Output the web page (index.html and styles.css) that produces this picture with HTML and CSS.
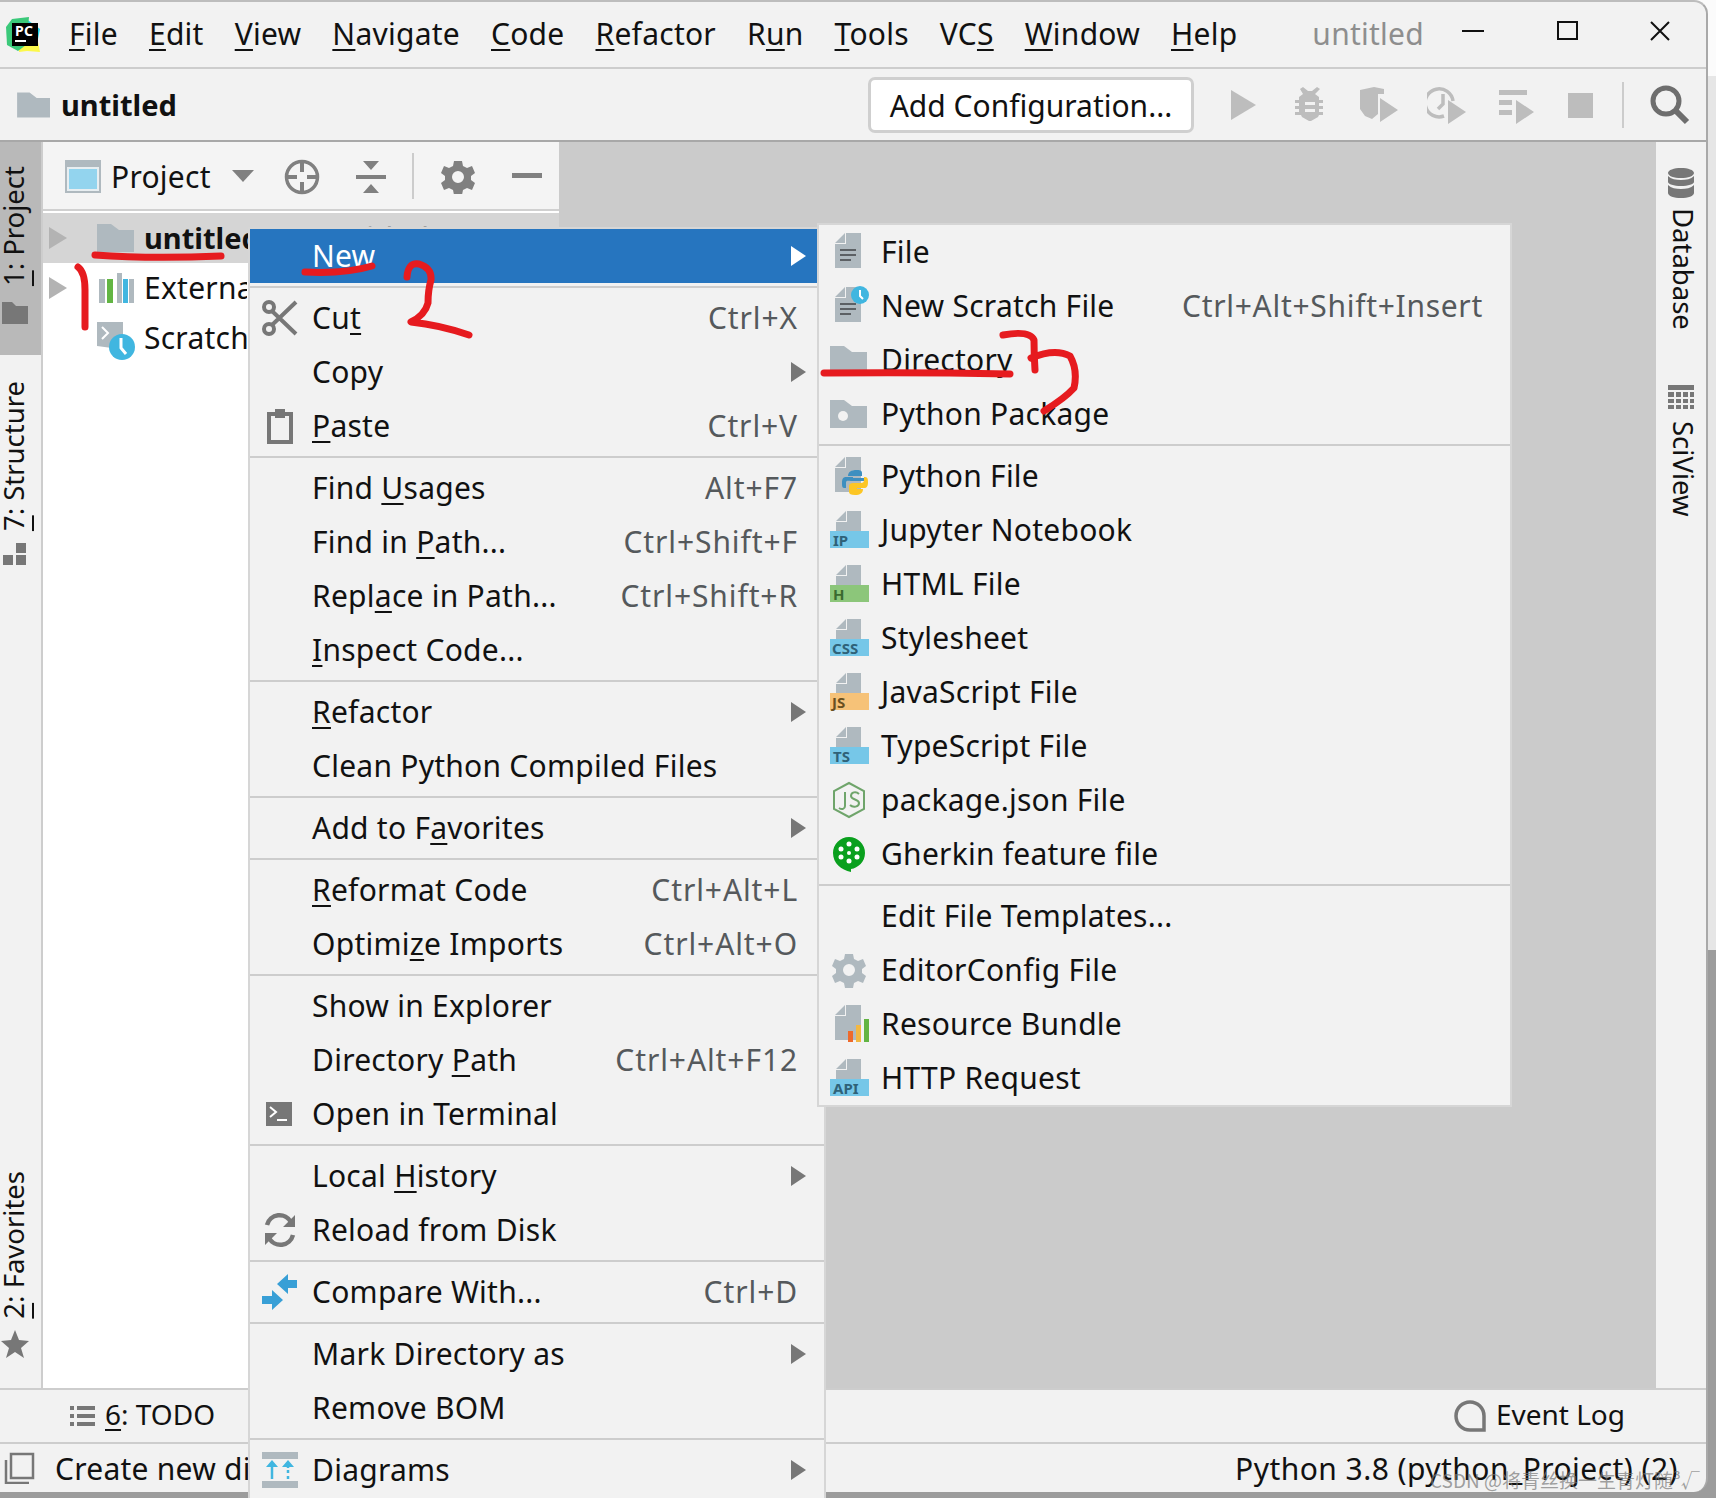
FILE: index.html
```html
<!DOCTYPE html>
<html lang="en">
<head>
<meta charset="utf-8">
<title>untitled</title>
<link rel="stylesheet" href="styles.css">
</head>
<body>
<svg class="defs" width="0" height="0" aria-hidden="true">
  <defs>
    <g id="doc"><path class="f-doc" d="M6 11 16 1v10zM17 1h15v35H6V12h11z"/></g>
    <g id="lines"><path class="f-dk" d="M11 17h16v2H11zM11 22h16v2H11zM11 27h11v2H11z"/></g>
    <g id="tdoc"><path class="f-doc" d="M7 11 17 1v10zM18 1h14v20H7v-9h11z"/></g>
    <path id="folder" d="M1 4h14l8 6h15v22H1z"/>
  </defs>
</svg>
<div class="page">
  <div class="window">
    <header class="titlebar">
      <svg class="logo" width="36" height="36" viewBox="0 0 36 36">
        <path fill="#21d4e8" d="M20 2 35 13l-4 20-8-8z"/>
        <path fill="#fcf84a" d="M14 30 30 10l5 26-13-1-8 1z"/>
        <path fill="#3bc97a" d="M7 3 24 1l-3 28-8 6-11-6-1-18z"/>
        <rect x="7" y="7" width="26" height="23" fill="#000"/>
        <text class="logo-t" x="10" y="20">PC</text>
        <rect x="10" y="24" width="11" height="2" fill="#fff"/>
      </svg>
      <nav class="menubar">
        <span><u>F</u>ile</span><span><u>E</u>dit</span><span><u>V</u>iew</span><span><u>N</u>avigate</span><span><u>C</u>ode</span><span><u>R</u>efactor</span><span>R<u>u</u>n</span><span><u>T</u>ools</span><span>VC<u>S</u></span><span><u>W</u>indow</span><span><u>H</u>elp</span>
      </nav>
      <span class="wintitle">untitled</span>
      <div class="winctl">
        <span class="wc-min"></span>
        <span class="wc-max"></span>
        <svg width="20" height="20" viewBox="0 0 20 20"><path d="M1 1l18 18M19 1 1 19" stroke="#111" stroke-width="2" fill="none"/></svg>
      </div>
    </header>
    <div class="toolbar">
      <svg class="i-head" width="40" height="32" viewBox="0 0 40 36"><use href="#folder" class="f-doc"/></svg>
      <b class="crumb">untitled</b>
      <button class="addcfg">Add Configuration...</button>
      <div class="runset">
        <svg width="40" height="40" viewBox="3 0 40 40"><path class="f-off" d="M8 5 33 20 8 35z"/></svg>
        <svg width="40" height="40" viewBox="3 0 40 40"><path class="f-off" d="M10 4l3-2 5 4h4l5-4 3 2-5 5 4 3v3h4v3h-4v3h4v3h-4v3h4v3h-4l-1 2-7 4h-2l-7-4-1-2H5v-3h4v-3H5v-3h4v-3H5v-3h4v-3l4-3zM15 17v3h10v-3zM15 24v3h10v-3z" fill-rule="evenodd"/></svg>
        <svg width="40" height="40" viewBox="1 0 40 40"><path class="f-off" d="M1 5 15 2l10 2v5h-6v20l-6 5-7-3-5-7zM21 13l18 12-18 12z"/></svg>
        <svg width="40" height="40" viewBox="-1 0 40 40"><path d="M25 16A14 14 0 1 0 16 31M15 9v10l-5 5" fill="none" stroke="#bdbdbd" stroke-width="3.5"/><path class="f-off" d="M20 15l18 12-18 12z"/></svg>
        <svg width="40" height="40" viewBox="-2 0 40 40"><path class="f-off" d="M3 5h28v5H3zM3 15h13v5H3zM3 25h13v5H3zM20 15l18 12-18 12z"/></svg>
        <svg width="40" height="40" viewBox="0 0 40 40"><rect class="f-off" x="7" y="8" width="25" height="25"/></svg>
      </div>
      <span class="tb-sep"></span>
      <svg width="40" height="40" viewBox="0 0 40 40"><circle cx="16" cy="16" r="13" fill="none" stroke="#6e6e6e" stroke-width="5"/><path d="M25 25 37 37" stroke="#6e6e6e" stroke-width="6"/></svg>
    </div>
    <main class="body">
      <aside class="strip-left">
        <div class="vtab vtab-on">
          <span class="vt"><u>1</u>: Project</span>
          <svg width="26" height="22" viewBox="0 0 26 22"><path class="f-strip" d="M0 0h10l4 4h12v18H0z"/></svg>
        </div>
        <div class="vtab vtab-st">
          <span class="vt"><u>7</u>: Structure</span>
          <svg width="24" height="22" viewBox="0 0 24 22"><path class="f-strip" d="M13 0h10v10H13zM0 12h10v10H0zM13 12h10v10H13z"/></svg>
        </div>
        <div class="vtab vtab-fav">
          <span class="vt"><u>2</u>: Favorites</span>
          <svg width="28" height="28" viewBox="0 0 28 28"><path class="f-strip" d="M14 0l4 10 10 1-8 7 3 10-9-6-9 6 3-10-8-7 10-1z"/></svg>
        </div>
      </aside>
      <section class="project">
        <div class="p-head">
          <svg class="p-ico" width="36" height="33" viewBox="0 0 36 33"><rect width="36" height="33" fill="#afb9bf"/><rect x="2" y="7" width="32" height="24" fill="#e8eef1"/><rect x="4" y="9" width="28" height="20" fill="#93d4ee"/></svg>
          <span class="p-title">Project</span>
          <span class="p-drop"></span>
          <svg class="p-target" width="36" height="36" viewBox="0 0 36 36"><circle cx="18" cy="18" r="15.5" fill="none" stroke="#808080" stroke-width="3.5"/><path d="M18 2v11M18 23v11M2 18h11M23 18h11" stroke="#808080" stroke-width="4"/></svg>
          <svg class="p-coll" width="32" height="34" viewBox="0 0 32 34"><path fill="#808080" d="M8 1h16l-8 9zM1 15h30v4H1zM16 24l8 9H8z"/></svg>
          <span class="p-sep"></span>
          <svg class="p-gear" width="34" height="34" viewBox="0 0 34 34"><path fill="#808080" fill-rule="evenodd" d="M13 1h8l1 5 4 2 5-2 3 7-4 3v4l4 3-3 7-5-2-4 2-1 5h-8l-1-5-4-2-5 2-3-7 4-3v-4L0 13l3-7 5 2 4-2zM17 11a6 6 0 1 0 0 12 6 6 0 0 0 0-12z"/></svg>
          <span class="p-min"></span>
        </div>
        <div class="p-rule"></div>
        <div class="tree">
          <div class="t-row t-sel">
            <span class="t-arrow"></span>
            <svg class="t-ico" width="40" height="36" viewBox="0 0 40 36"><use href="#folder" class="f-doc"/></svg>
            <b>untitled</b><span class="t-path">D:\untitled</span>
          </div>
          <div class="t-row">
            <span class="t-arrow"></span>
            <svg class="t-ico" width="40" height="36" viewBox="0 0 40 36"><path class="f-doc" d="M3 9h6v24H3zM21 3h5v30h-5zM33 9h5v24h-5z"/><path fill="#62b543" d="M11 9h6v24h-6z"/><path fill="#40b6e0" d="M27 9h5v24h-5z"/></svg>
            <span class="t-clip">External Libraries</span>
          </div>
          <div class="t-row">
            <span class="t-noarrow"></span>
            <svg class="t-ico t-sc" width="40" height="40" viewBox="0 0 40 40"><path class="f-doc" d="M1 1h26v14L16 27l-15-2z"/><path d="M6 6l6 6-6 6" fill="none" stroke="#fff" stroke-width="2"/><circle cx="26" cy="26" r="13" fill="#40b6e0"/><path d="M25 17v10l5 6" fill="none" stroke="#fff" stroke-width="3"/></svg>
            <span class="t-clip">Scratches and Consoles</span>
          </div>
        </div>
      </section>
      <div class="editor"></div>
      <aside class="strip-right">
        <div class="rtab rtab-db">
          <svg width="28" height="30" viewBox="0 0 28 30"><path class="f-strip" d="M14 0c7 0 13 2 13 5s-6 5-13 5S1 8 1 5s6-5 13-5zM1 8c3 3 8 4 13 4s10-1 13-4v6c0 2-6 4-13 4S1 16 1 14zM1 17c3 3 8 4 13 4s10-1 13-4v8c0 3-6 5-13 5S1 28 1 25z"/></svg>
          <span class="vr">Database</span>
        </div>
        <div class="rtab rtab-sv">
          <svg width="28" height="24" viewBox="0 0 28 24"><path class="f-strip" d="M1 0h26v5H1zM1 7h6v5H1zM9 7h5v5H9zM16 7h5v5h-5zM23 7h4v5h-4zM1 14h6v4H1zM9 14h5v4H9zM16 14h5v4h-5zM23 14h4v4h-4zM1 20h6v4H1zM9 20h5v4H9zM16 20h5v4h-5zM23 20h4v4h-4z"/></svg>
          <span class="vr">SciView</span>
        </div>
      </aside>
    </main>
    <div class="toolsbar">
      <div class="todo">
        <svg width="25" height="20" viewBox="0 0 25 20"><path class="f-strip" d="M0 0h4v4H0zM7 0h18v4H7zM0 8h4v4H0zM7 8h18v4H7zM0 16h4v4H0zM7 16h18v4H7z"/></svg>
        <span><u>6</u>: TODO</span>
      </div>
      <div class="evlog">
        <svg width="32" height="32" viewBox="0 0 32 32"><path d="M30 30H16A14 14 0 1 1 30 16z" fill="none" stroke="#777" stroke-width="3.5"/></svg>
        <span>Event Log</span>
      </div>
    </div>
    <div class="statusbar">
      <svg class="st-ico" width="32" height="32" viewBox="0 0 32 32"><path d="M8 2h22v24H8zM3 8v23h23" fill="none" stroke="#777" stroke-width="2.5"/></svg>
      <span class="st-msg">Create new directory or Python package</span>
      <span class="st-py">Python 3.8 (python_Project) (2)</span>
    </div>
  </div>

  <div class="menu menu-main">
    <div class="row row-on"><span class="slot"></span><span>New</span><i class="arr"></i></div>
    <div class="hr"></div>
    <div class="row"><span class="slot"><svg width="40" height="40" viewBox="0 0 40 40"><g fill="none" stroke="#777" stroke-width="4"><circle cx="9" cy="9" r="5"/><circle cx="9" cy="31" r="5"/><path d="M12 13 36 36M12 27 36 4"/></g></svg></span><span>Cu<u>t</u></span><em>Ctrl+X</em></div>
    <div class="row"><span class="slot"></span><span>Copy</span><i class="arr"></i></div>
    <div class="row"><span class="slot"><svg width="40" height="40" viewBox="0 0 40 40"><path d="M9 8h22v28H9z" fill="none" stroke="#777" stroke-width="4"/><path fill="#777" d="M15 3h10v9H15z"/></svg></span><span><u>P</u>aste</span><em>Ctrl+V</em></div>
    <div class="hr"></div>
    <div class="row"><span class="slot"></span><span>Find <u>U</u>sages</span><em>Alt+F7</em></div>
    <div class="row"><span class="slot"></span><span>Find in <u>P</u>ath...</span><em>Ctrl+Shift+F</em></div>
    <div class="row"><span class="slot"></span><span>Repl<u>a</u>ce in Path...</span><em>Ctrl+Shift+R</em></div>
    <div class="row"><span class="slot"></span><span><u>I</u>nspect Code...</span></div>
    <div class="hr"></div>
    <div class="row"><span class="slot"></span><span><u>R</u>efactor</span><i class="arr"></i></div>
    <div class="row"><span class="slot"></span><span>Clean Python Compiled Files</span></div>
    <div class="hr"></div>
    <div class="row"><span class="slot"></span><span>Add to F<u>a</u>vorites</span><i class="arr"></i></div>
    <div class="hr"></div>
    <div class="row"><span class="slot"></span><span><u>R</u>eformat Code</span><em>Ctrl+Alt+L</em></div>
    <div class="row"><span class="slot"></span><span>Optimi<u>z</u>e Imports</span><em>Ctrl+Alt+O</em></div>
    <div class="hr"></div>
    <div class="row"><span class="slot"></span><span>Show in Explorer</span></div>
    <div class="row"><span class="slot"></span><span>Directory <u>P</u>ath</span><em>Ctrl+Alt+F12</em></div>
    <div class="row"><span class="slot"><svg width="40" height="40" viewBox="0 0 40 40"><rect x="6" y="8" width="26" height="24" fill="#777"/><path d="M10 13l6 5-6 5" fill="none" stroke="#fff" stroke-width="2"/><path d="M17 25h10v2H17z" fill="#fff"/></svg></span><span>Open in Terminal</span></div>
    <div class="hr"></div>
    <div class="row"><span class="slot"></span><span>Local <u>H</u>istory</span><i class="arr"></i></div>
    <div class="row"><span class="slot"><svg width="40" height="40" viewBox="0 0 40 40"><g fill="none" stroke="#777" stroke-width="4.5"><path d="M7 15A13 13 0 0 1 31 12"/><path d="M33 25A13 13 0 0 1 9 28"/></g><path fill="#777" d="M35 5v12H23zM5 35V23h12z"/></svg></span><span>Reload from Disk</span></div>
    <div class="hr"></div>
    <div class="row"><span class="slot"><svg width="40" height="40" viewBox="0 0 40 40"><path fill="#389fd6" d="M28 2v6h9v8h-9v6l-11-10zM12 38v-6H2v-8h10v-6l11 10z"/></svg></span><span>Compare With...</span><em>Ctrl+D</em></div>
    <div class="hr"></div>
    <div class="row"><span class="slot"></span><span>Mark Directory as</span><i class="arr"></i></div>
    <div class="row"><span class="slot"></span><span>Remove BOM</span></div>
    <div class="hr"></div>
    <div class="row"><span class="slot"><svg width="40" height="40" viewBox="0 0 40 40"><path class="f-doc" d="M2 2h36v7H2zM2 31h36v7H2z"/><path d="M12 29V15M28 29v-3M28 23v-3M28 18v-3" stroke="#40b6e0" stroke-width="2.5"/><path fill="#40b6e0" d="M12 10l6 7H6zM28 10l6 7H22z"/></svg></span><span>Diagrams</span><i class="arr"></i></div>
  </div>

  <div class="menu menu-sub">
    <div class="row"><span class="slot"><svg width="40" height="40" viewBox="0 0 40 40"><use href="#doc"/><use href="#lines"/></svg></span><span>File</span></div>
    <div class="row"><span class="slot"><svg width="40" height="40" viewBox="0 0 40 40"><use href="#doc"/><use href="#lines"/><circle cx="31" cy="9" r="9" fill="#40b6e0"/><path d="M31 4v6l3 3" fill="none" stroke="#fff" stroke-width="2"/></svg></span><span>New Scratch File</span><em>Ctrl+Alt+Shift+Insert</em></div>
    <div class="row"><span class="slot"><svg width="40" height="36" viewBox="0 0 40 36"><use href="#folder" class="f-doc"/></svg></span><span>Directory</span></div>
    <div class="row"><span class="slot"><svg width="40" height="36" viewBox="0 0 40 36"><use href="#folder" class="f-doc"/><circle cx="14" cy="20" r="5" fill="#f2f2f2"/></svg></span><span>Python Package</span></div>
    <div class="hr"></div>
    <div class="row"><span class="slot"><svg width="40" height="40" viewBox="0 0 40 40"><use href="#doc"/><path fill="#3d8fc0" d="M28 14c4 0 5 1 5 3v3H24v2h12l-0 3h-14c-3 0-5-1-5 2v5h-2c-2 0-2-3-2-5 0-4 1-6 4-6h7v-1h-5c0-4 3-6 9-6z"/><path fill="#fcc624" d="M36 21c3 0 3 3 3 5 0 4-1 6-4 6h-7v1h6c0 4-3 6-8 6-4 0-6-1-6-3v-6c0-2 2-3 4-3h8c2 0 3-1 3-3v-3z"/></svg></span><span>Python File</span></div>
    <div class="row"><span class="slot"><svg width="40" height="40" viewBox="0 0 40 40"><use href="#tdoc"/><rect class="b-blue" x="1" y="21" width="39" height="17"/><text class="bt bt-blue" x="4" y="36">IP</text></svg></span><span>Jupyter Notebook</span></div>
    <div class="row"><span class="slot"><svg width="40" height="40" viewBox="0 0 40 40"><use href="#tdoc"/><rect class="b-green" x="1" y="21" width="39" height="17"/><text class="bt bt-green" x="4" y="36">H</text></svg></span><span>HTML File</span></div>
    <div class="row"><span class="slot"><svg width="40" height="40" viewBox="0 0 40 40"><use href="#tdoc"/><rect class="b-blue" x="1" y="21" width="39" height="17"/><text class="bt bt-blue" x="3" y="36">CSS</text></svg></span><span>Stylesheet</span></div>
    <div class="row"><span class="slot"><svg width="40" height="40" viewBox="0 0 40 40"><use href="#tdoc"/><rect class="b-orange" x="1" y="21" width="39" height="17"/><text class="bt bt-orange" x="3" y="36">JS</text></svg></span><span>JavaScript File</span></div>
    <div class="row"><span class="slot"><svg width="40" height="40" viewBox="0 0 40 40"><use href="#tdoc"/><rect class="b-blue" x="1" y="21" width="39" height="17"/><text class="bt bt-blue" x="4" y="36">TS</text></svg></span><span>TypeScript File</span></div>
    <div class="row"><span class="slot"><svg width="40" height="40" viewBox="0 0 40 40"><path d="M20 3 35 11v18L20 37 5 29V11z" fill="none" stroke="#6fa56b" stroke-width="2"/><path d="M16 12v14c0 3-3 4-6 2M30 14c-3-3-8-2-8 2s8 3 8 7-6 5-9 2" fill="none" stroke="#6fa56b" stroke-width="2"/></svg></span><span>package.json File</span></div>
    <div class="row"><span class="slot"><svg width="40" height="40" viewBox="0 0 40 40"><path fill="#0aa01e" d="M20 3a16 16 0 0 1 16 16c0 9-7 15-14 16v3c-10-2-18-9-18-19A16 16 0 0 1 20 3z"/><g fill="#fff"><circle cx="20" cy="10" r="2.5"/><circle cx="20" cy="27" r="2.5"/><circle cx="12" cy="15" r="2.5"/><circle cx="28" cy="15" r="2.5"/><circle cx="12" cy="23" r="2.5"/><circle cx="28" cy="23" r="2.5"/><circle cx="20" cy="19" r="2"/></g></svg></span><span>Gherkin feature file</span></div>
    <div class="hr"></div>
    <div class="row"><span class="slot"></span><span>Edit File Templates...</span></div>
    <div class="row"><span class="slot"><svg width="40" height="40" viewBox="-3 -3 40 40"><path class="f-doc" fill-rule="evenodd" d="M13 1h8l1 5 4 2 5-2 3 7-4 3v4l4 3-3 7-5-2-4 2-1 5h-8l-1-5-4-2-5 2-3-7 4-3v-4L0 13l3-7 5 2 4-2zM17 11a6 6 0 1 0 0 12 6 6 0 0 0 0-12z"/></svg></span><span>EditorConfig File</span></div>
    <div class="row"><span class="slot"><svg width="40" height="40" viewBox="0 0 40 40"><use href="#doc"/><rect x="19" y="27" width="5" height="11" fill="#ee6a2b"/><rect x="27" y="21" width="5" height="17" fill="#f2b843"/><rect x="35" y="15" width="5" height="23" fill="#62b543"/></svg></span><span>Resource Bundle</span></div>
    <div class="row"><span class="slot"><svg width="40" height="40" viewBox="0 0 40 40"><use href="#tdoc"/><rect class="b-blue" x="1" y="21" width="39" height="17"/><text class="bt bt-blue" x="4" y="36">API</text></svg></span><span>HTTP Request</span></div>
  </div>

  <svg class="ink" width="1716" height="1498" viewBox="0 0 1716 1498" aria-hidden="true">
    <path d="M95 255Q150 259 221 256M78 267Q85 272 85 290L85 327M305 272Q345 274 372 266M407 277Q408 262 419 264Q432 268 431 280Q428 290 428 303Q425 315 411 322Q440 325 469 335M824 373Q920 372 1010 374M1003 335Q1030 330 1034 340Q1034 355 1035 370M1031 358Q1055 348 1070 356Q1078 370 1074 388Q1065 398 1044 411"/>
  </svg>
  <span class="mark">CSDN @将青丝换一生青灯随³√</span>
</div>
</body>
</html>
```

FILE: styles.css
```css
* { box-sizing: border-box; }
html, body { margin: 0; padding: 0; }
body {
  width: 1716px;
  height: 1498px;
  overflow: hidden;
  font-family: "Noto Sans", "Open Sans", sans-serif;
  font-size: 30px;
  letter-spacing: 0.25px;
  color: #111;
  background: linear-gradient(#fbfbfb 0, #fbfbfb 76px, #e6e6e6 76px, #e6e6e6 950px, #9c9c9c 950px);
}
u { text-underline-offset: 4px; text-decoration-thickness: 2px; }
.defs { position: absolute; }
.page { position: relative; width: 1716px; height: 1498px; overflow: hidden; }

.f-doc { fill: #afb9bf; }
.f-dk { fill: #5c6064; }
.f-off { fill: #bdbdbd; }
.f-strip { fill: #777; }

.window {
  width: 1708px;
  height: 1492px;
  display: flex;
  flex-direction: column;
  background: #f2f2f2;
  border-top: 2px solid #bdbdbd;
  border-right: 2px solid #a9a9a9;
  border-top-right-radius: 14px;
  border-bottom-right-radius: 14px;
  overflow: hidden;
}

.titlebar {
  height: 67px;
  flex: none;
  display: flex;
  align-items: center;
  padding-left: 5px;
  padding-bottom: 2px;
  border-bottom: 2px solid #cdcdcd;
}
.logo { flex: none; }
.logo-t { font: 700 14px "Noto Sans", sans-serif; fill: #fff; }
.menubar { display: flex; gap: 31px; margin-left: 28px; }
.wintitle { margin-left: 75px; color: #8e8e8e; }
.winctl { margin-left: auto; display: flex; align-items: center; }
.wc-min { width: 22px; height: 2px; background: #111; margin-right: 73px; margin-top: -6px; }
.wc-max { width: 21px; height: 19px; border: 2px solid #111; margin-right: 72px; margin-top: -6px; }
.winctl svg { margin-right: 36px; margin-top: -6px; }

.toolbar {
  height: 73px;
  flex: none;
  display: flex;
  align-items: center;
  padding: 0 16px 0 14px;
  border-bottom: 2px solid #a8a8a8;
}
.i-head { flex: none; }
.crumb { margin-left: 7px; font-size: 29px; letter-spacing: 0; }
.addcfg {
  margin-left: auto;
  width: 326px;
  height: 56px;
  background: #fff;
  border: 3px solid #cfcfcf;
  border-radius: 7px;
  font: inherit;
  letter-spacing: 0;
  color: #111;
  padding: 2px 0 0;
}
.runset { display: flex; gap: 27px; margin-left: 32px; }
.tb-sep { width: 2px; height: 46px; background: #ccc; margin: 0 26px 0 21px; }

.body { flex: 1; min-height: 0; display: flex; }

.strip-left {
  width: 43px;
  flex: none;
  display: flex;
  flex-direction: column;
  border-right: 2px solid #cdcdcd;
  background: #f2f2f2;
}
.vtab { display: flex; flex-direction: column; align-items: center; width: 41px; }
.vt { writing-mode: vertical-rl; transform: rotate(180deg); line-height: 24px; margin-right: 14px; font-size: 27.5px; letter-spacing: 0; white-space: nowrap; }
.vtab svg { margin-left: -12px; flex: none; }
.vtab-on { height: 213px; padding-top: 24px; background: #b9b9b9; }
.vtab-on svg { margin-top: 16px; }
.vtab-st { padding-top: 26px; }
.vtab-st svg { margin-top: 12px; }
.vtab-fav { margin-top: auto; padding-bottom: 30px; }
.vtab-fav svg { margin-top: 11px; }

.project { width: 516px; flex: none; display: flex; flex-direction: column; background: #fff; }
.p-head {
  height: 67px;
  flex: none;
  display: flex;
  align-items: center;
  background: #f4f4f4;
  padding-left: 22px;
}
.p-head > svg { position: relative; top: 1px; }
.p-title { margin-left: 10px; padding-top: 2px; }
.p-drop { width: 0; height: 0; margin-left: 21px; border: 11px solid transparent; border-top: 12px solid #808080; border-bottom: 0; }
.p-target { margin-left: 30px; }
.p-coll { margin-left: 35px; }
.p-sep { width: 2px; height: 46px; background: #ccc; margin-left: 25px; }
.p-gear { margin-left: 27px; }
.p-min { width: 30px; height: 5px; background: #808080; margin-left: 37px; }
.p-rule { height: 4px; flex: none; background: #fff; border-top: 2px solid #d0d0d0; }

.tree { flex: 1; background: #fff; }
.t-row { height: 50px; display: flex; align-items: center; padding-left: 6px; white-space: nowrap; overflow: hidden; }
.t-row > b, .t-row > .t-clip, .t-row > .t-path { padding-bottom: 2px; }
.t-row > b { font-size: 29px; letter-spacing: 0; }
.t-sel { background: #d5d5d5; }
.t-arrow { width: 0; height: 0; flex: none; border: 11px solid transparent; border-left: 18px solid #b3b3b3; border-right: 0; }
.t-noarrow { width: 18px; flex: none; }
.t-ico { margin-left: 29px; margin-right: 8px; flex: none; }
.t-sc { margin-top: 6px; }
.t-path { margin-left: 16px; color: #a0a0a0; }
.t-clip { width: 103px; overflow: hidden; }

.editor { flex: 1; background: #cbcbcb; }

.strip-right { width: 50px; flex: none; display: flex; flex-direction: column; align-items: center; background: #f2f2f2; }
.rtab { display: flex; flex-direction: column; align-items: center; }
.rtab svg { flex: none; }
.vr { writing-mode: vertical-rl; line-height: 30px; margin-left: 4px; font-size: 27.5px; letter-spacing: 0; white-space: nowrap; }
.rtab-db { padding-top: 26px; }
.rtab-db .vr { margin-top: 10px; }
.rtab-sv { margin-top: 55px; }
.rtab-sv .vr { margin-top: 12px; }

.toolsbar {
  height: 54px;
  flex: none;
  display: flex;
  align-items: center;
  justify-content: space-between;
  border-top: 2px solid #cdcdcd;
  padding-left: 70px;
  padding-right: 81px;
}
.toolsbar span { letter-spacing: 0; font-size: 28px; padding-bottom: 4px; }
.todo, .evlog { display: flex; align-items: center; gap: 10px; }
.statusbar {
  height: 50px;
  flex: none;
  display: flex;
  align-items: center;
  border-top: 2px solid #cdcdcd;
  padding-left: 3px;
  padding-right: 28px;
  white-space: nowrap;
}
.st-ico { flex: none; }
.st-msg { margin-left: 20px; width: 195px; overflow: hidden; flex: none; }
.st-py { margin-left: auto; letter-spacing: 0.45px; }

.menu {
  position: absolute;
  background: #f2f2f2;
  border: 2px solid #d6d6d6;
  white-space: nowrap;
  overflow: hidden;
}
.menu-main { left: 248px; top: 227px; width: 578px; bottom: 0; border-bottom: 0; }
.menu-sub { left: 817px; top: 223px; width: 695px; }
.row { height: 54px; display: flex; align-items: center; padding-right: 18px; }
.row > span:not(.slot), .row > em { padding-bottom: 2px; }
.row em { margin-left: auto; font-style: normal; color: #55595c; margin-right: 8px; letter-spacing: 0.9px; }
.slot { width: 62px; flex: none; padding-left: 10px; display: flex; align-items: center; }
.menu-sub .row em { margin-right: 9px; letter-spacing: 0.7px; }
.row-on { background: #2675bf; color: #fff; }
.arr { margin-left: auto; width: 0; height: 0; border: 10px solid transparent; border-left: 15px solid #777; border-right: 0; }
.row-on .arr { border-left-color: #fff; }
.hr { height: 2px; margin: 3px 0; background: #cdcdcd; }

.b-blue { fill: #76c7e8; }
.b-green { fill: #8cc67a; }
.b-orange { fill: #f6c278; }
.bt { font: 700 15px "Noto Sans", sans-serif; letter-spacing: 0; }
.bt-blue { fill: #2f6278; }
.bt-green { fill: #3a6a30; }
.bt-orange { fill: #6a5020; }

.ink { position: absolute; left: 0; top: 0; pointer-events: none; }
.ink path { fill: none; stroke: #e61b1f; stroke-width: 7; stroke-linecap: round; stroke-linejoin: round; }
.mark {
  position: absolute;
  left: 1430px;
  top: 1466px;
  font-family: "Noto Sans CJK SC", "Noto Sans", sans-serif;
  font-size: 19px;
  letter-spacing: 0;
  color: rgba(120, 120, 120, 0.7);
  white-space: nowrap;
}
```
